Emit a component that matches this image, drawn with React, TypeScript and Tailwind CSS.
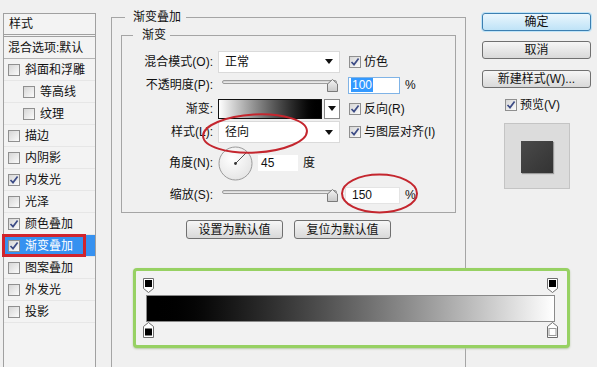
import React from 'react';

// 左侧样式列表
const styleItems = [
  { label: '斜面和浮雕' },
  { label: '等高线', indent: true },
  { label: '纹理', indent: true },
  { label: '描边' },
  { label: '内阴影' },
  { label: '内发光', checked: true },
  { label: '光泽' },
  { label: '颜色叠加', checked: true },
  { label: '渐变叠加', checked: true, active: true },
  { label: '图案叠加' },
  { label: '外发光' },
  { label: '投影' },
];

function Check({ checked }: { checked?: boolean }) {
  return (
    <span className="flex h-[12px] w-[12px] shrink-0 items-center justify-center border border-[#8f8f8f] bg-gradient-to-br from-[#d6d6d6] to-[#fbfbfb]">
      {checked && (
        <svg width="10" height="10" viewBox="0 0 10 10">
          <path d="M1.5 5 L4 7.6 L8.6 1.6" fill="none" stroke="#3d4c86" strokeWidth="1.7" />
        </svg>
      )}
    </span>
  );
}

function Arrow() {
  return (
    <svg width="8" height="5" viewBox="0 0 8 5">
      <path d="M0 0 H8 L4 5 Z" fill="#111" />
    </svg>
  );
}

function Select({ value }: { value: string }) {
  return (
    <div className="flex h-[22px] w-[122px] shrink-0 items-center justify-between border border-[#dadada] bg-white pl-[6px] pr-[6px] text-[12px]">
      <span>{value}</span>
      <Arrow />
    </div>
  );
}

function Slider() {
  return (
    <div className="relative h-[16px] w-[122px] shrink-0 pl-[4px] pr-[3px] pt-[3px]">
      <div className="h-[4px] w-full rounded-full border border-[#9c9c9c] bg-gradient-to-b from-[#cfcfcf] to-[#f0f0f0]" />
      <svg className="absolute right-[2px] top-[2px]" width="11" height="13" viewBox="0 0 11 13">
        <defs>
          <linearGradient id="thumb" x1="0" y1="0" x2="0" y2="1">
            <stop offset="0" stopColor="#f4f4f4" />
            <stop offset="1" stopColor="#c9c9c9" />
          </linearGradient>
        </defs>
        <path d="M5.5 0.5 L10.5 5 V12.5 H0.5 V5 Z" fill="url(#thumb)" stroke="#7a7a7a" />
      </svg>
    </div>
  );
}

function Row({ label, h, children }: { label: string; h: string; children: React.ReactNode }) {
  return (
    <div className={`flex items-center ${h}`}>
      <div className="w-[92px] shrink-0 pr-[1px] text-right text-[12px]">{label}</div>
      <div className="ml-[4px] flex items-center">{children}</div>
    </div>
  );
}

function StopTop() {
  return (
    <svg width="11" height="15" viewBox="0 0 11 15">
      <path d="M0.5 0.5 H10.5 V10.5 L5.5 14.5 L0.5 10.5 Z" fill="#fff" stroke="#6e6e6e" />
      <rect x="2" y="2" width="7" height="7" fill="#000" />
    </svg>
  );
}

function StopBottom({ color }: { color: string }) {
  return (
    <svg width="11" height="16" viewBox="0 0 11 16">
      <path d="M5.5 0.5 L10.5 4.5 V15.5 H0.5 V4.5 Z" fill="#fff" stroke="#6e6e6e" />
      <rect x="2" y="6.5" width="7" height="7" fill={color} stroke={color === '#fff' ? '#9a9a9a' : 'none'} />
    </svg>
  );
}

function Btn({ children, primary, className = '' }: { children: React.ReactNode; primary?: boolean; className?: string }) {
  return (
    <div
      className={`flex items-center justify-center rounded-[3px] border text-[12px] leading-none ${
        primary
          ? 'border-[#3c7fb1] bg-gradient-to-b from-[#eaf6fd] to-[#bfe3f7] shadow-[0_0_0_1px_#bfe4f8]'
          : 'border-[#707070] bg-gradient-to-b from-[#f6f6f6] to-[#d9d9d9]'
      } ${className}`}
    >
      {children}
    </div>
  );
}

export default function App() {
  return (
    <div className="relative flex h-[367px] w-[597px] overflow-hidden bg-[#f0f0f0] text-[#111] [font-family:'Liberation_Sans','Noto_Sans_CJK_SC',sans-serif]">
      {/* 左侧样式列表 */}
      <div className="ml-[3px] mt-[13px] h-[360px] w-[93px] shrink-0 border border-[#a0a0a0] bg-[#f3f3f3] text-[12px]">
        <div className="flex h-[23px] items-center border-b-[3px] border-double border-[#a0a0a0] pl-[5px]">样式</div>
        <div className="flex h-[22px] items-center border-b border-[#b4b4b4] pl-[4px] whitespace-nowrap">混合选项:默认</div>
        {styleItems.map((it) => (
          <div
            key={it.label}
            className={`relative flex h-[22px] items-center border-b border-[#e6e6e6] ${it.indent ? 'pl-[19px]' : 'pl-[4px]'} ${
              it.active ? 'bg-[#3691f0] text-white' : ''
            }`}
          >
            <Check checked={it.checked} />
            <span className="ml-[5px]">{it.label}</span>
            {it.active && <div className="pointer-events-none absolute -left-[2px] -top-[1px] h-[23px] w-[84px] border-[3px] border-[#d1242c]" />}
          </div>
        ))}
      </div>

      {/* 渐变叠加 */}
      <fieldset className="ml-[15px] mt-[10px] h-[370px] w-[355px] shrink-0 border border-[#a5a5a5] px-[9px]">
        <legend className="ml-[4px] pl-[8px] pr-[5px] text-[12px] leading-[14px]">渐变叠加</legend>
        <fieldset className="mt-[4px] h-[185px] w-full border border-[#a5a5a5]">
          <legend className="ml-[11px] pl-[9px] pr-[4px] text-[12px] leading-[14px]">渐变</legend>
          <div className="flex flex-col pt-[8px]">
            <Row label="混合模式(O):" h="h-[23px]">
              <Select value="正常" />
              <div className="ml-[9px] flex items-center text-[12px]">
                <Check checked />
                <span className="ml-[3px]">仿色</span>
              </div>
            </Row>
            <Row label="不透明度(P):" h="h-[24px]">
              <Slider />
              <div className="ml-[8px] flex h-[17px] w-[52px] items-center border border-[#7fb3e6] bg-white pl-[2px] text-[12px]">
                <span className="bg-[#3399ff] px-[1px] leading-[14px] text-white">100</span>
              </div>
              <span className="ml-[5px] text-[12px]">%</span>
            </Row>
            <Row label="渐变:" h="h-[23px]">
              <div className="flex h-[20px] w-[122px] shrink-0">
                <div className="h-full w-[104px] border border-[#111] bg-gradient-to-r from-white to-black" />
                <div className="ml-[2px] flex h-full flex-1 items-center justify-center border border-[#8a8a8a] bg-white">
                  <Arrow />
                </div>
              </div>
              <div className="ml-[9px] flex items-center text-[12px]">
                <Check checked />
                <span className="ml-[3px]">反向(R)</span>
              </div>
            </Row>
            <Row label="样式(L):" h="h-[24px]">
              <Select value="径向" />
              <div className="ml-[9px] flex items-center text-[12px]">
                <Check checked />
                <span className="ml-[3px]">与图层对齐(I)</span>
              </div>
            </Row>
            <Row label="角度(N):" h="h-[38px]">
              <svg width="35" height="35" viewBox="0 0 35 35">
                <defs>
                  <radialGradient id="dial" cx="0.4" cy="0.35" r="0.7">
                    <stop offset="0" stopColor="#ffffff" />
                    <stop offset="1" stopColor="#e4e4e4" />
                  </radialGradient>
                </defs>
                <circle cx="17.5" cy="17.5" r="16.5" fill="url(#dial)" stroke="#9a9a9a" />
                <line x1="17.5" y1="17.5" x2="28" y2="7" stroke="#555" strokeWidth="1" />
                <circle cx="17.5" cy="17.5" r="1.4" fill="#333" />
              </svg>
              <div className="ml-[5px] flex h-[16px] w-[40px] items-center bg-white pl-[3px] text-[12px]">45</div>
              <span className="ml-[5px] text-[12px]">度</span>
            </Row>
            <Row label="缩放(S):" h="h-[26px]">
              <Slider />
              <div className="ml-[5px] flex h-[17px] w-[55px] items-center border border-[#e4e4e4] bg-white pl-[6px] text-[12px]">150</div>
              <span className="ml-[5px] text-[12px]">%</span>
            </Row>
          </div>
        </fieldset>
        <div className="mt-[7px] flex justify-center gap-[11px]">
          <Btn className="h-[19px] w-[97px]">设置为默认值</Btn>
          <Btn className="h-[19px] w-[97px]">复位为默认值</Btn>
        </div>
      </fieldset>

      {/* 右侧按钮 */}
      <div className="ml-[16px] mt-[13px] flex w-[109px] shrink-0 flex-col">
        <Btn primary className="h-[18px]">确定</Btn>
        <Btn className="mt-[10px] h-[18px]">取消</Btn>
        <Btn className="mt-[11px] h-[18px] whitespace-nowrap">新建样式(W)...</Btn>
        <div className="mt-[8px] flex items-center pl-[23px] text-[12px]">
          <Check checked />
          <span className="ml-[3px]">预览(V)</span>
        </div>
        <div className="ml-[22px] mt-[9px] h-[66px] w-[66px] border border-[#c4c4c4] bg-[#dcdcdc] pl-[16px] pt-[17px]">
          <div className="h-[32px] w-[32px] bg-gradient-to-br from-[#4a4a4a] to-[#333] shadow-[1px_1px_1px_#9a9a9a]" />
        </div>
      </div>

      {/* 渐变编辑条（叠加在对话框上） */}
      <div className="absolute left-[133px] top-[268px] h-[80px] w-[437px] rounded-[4px] border-[3px] border-[#97d163] bg-[#f2f2f2] shadow-[0_1px_2px_#b8c8a8]">
        <div className="flex flex-col pl-[7px] pr-[9px] pt-[7px]">
          <div className="flex justify-between">
            <StopTop />
            <StopTop />
          </div>
          <div className="mx-[3px] mt-[2px] h-[27px] border border-[#8a8a8a] bg-gradient-to-r from-black to-white" />
          <div className="flex justify-between">
            <StopBottom color="#000" />
            <StopBottom color="#fff" />
          </div>
        </div>
      </div>

      {/* 红色标注圈 */}
      <svg className="pointer-events-none absolute left-0 top-0" width="597" height="367">
        <ellipse cx="255" cy="133.5" rx="52" ry="19" fill="none" stroke="#c4262e" strokeWidth="2" transform="rotate(-3 255 133.5)" />
        <ellipse cx="379.5" cy="193.5" rx="37.5" ry="19" fill="none" stroke="#c4262e" strokeWidth="2" />
      </svg>
    </div>
  );
}
